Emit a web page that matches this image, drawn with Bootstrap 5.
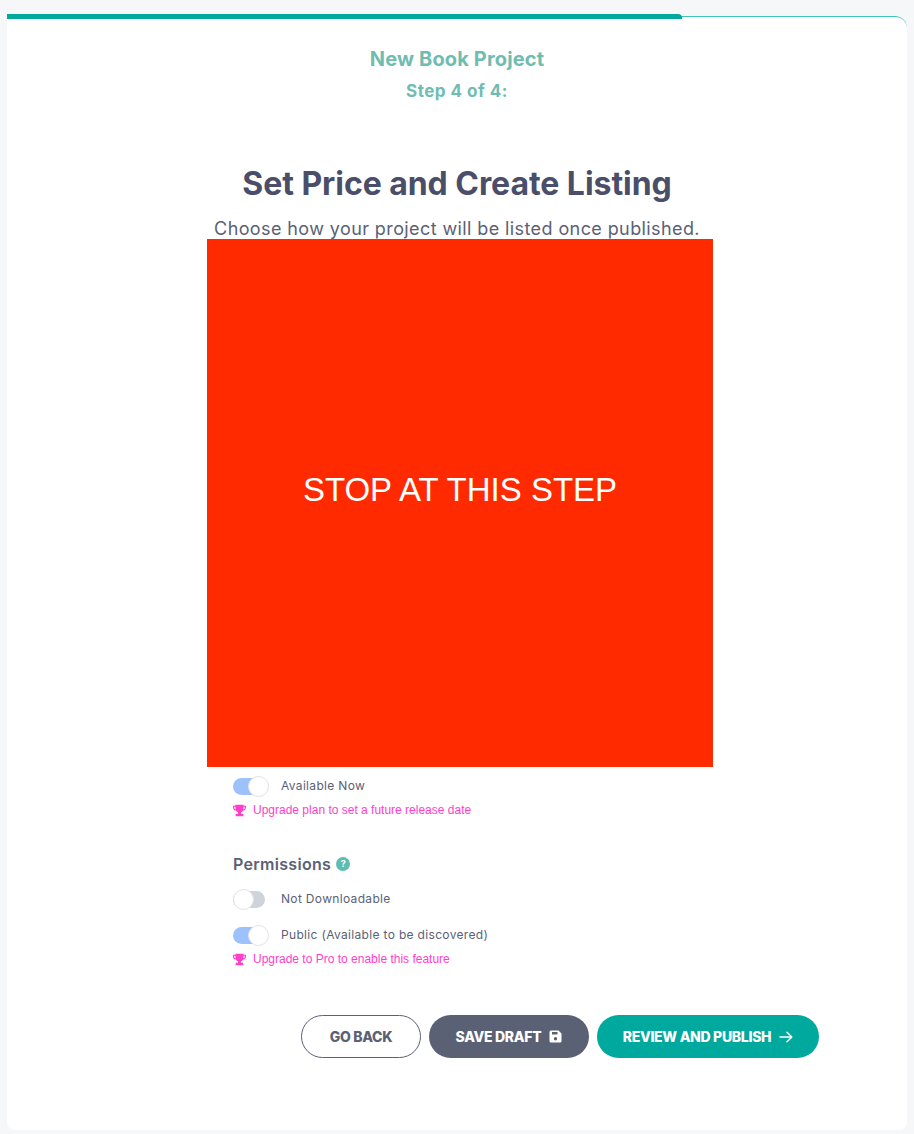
<!DOCTYPE html>
<html lang="en">
<head>
<meta charset="utf-8">
<title>New Book Project</title>
<link href="https://cdn.jsdelivr.net/npm/bootstrap@5.3.0/dist/css/bootstrap.min.css" rel="stylesheet">
<style>
html,body{height:100%}
body{background:#f6f7f9;font-family:"Inter","Noto Sans",sans-serif;color:#5a6175;margin:0;overflow:hidden}
.shell{position:relative;margin:0 7px;padding-top:16px;height:1130px}
.prog{position:absolute;left:0;top:14px;width:675px;height:5px;background:#00a99d;border-top-right-radius:4px}
.sheet{height:1114px;background:#fff;border-top:1px solid #3fc4b8;border-radius:0 12px 8px 8px;display:flex;flex-direction:column;align-items:center}
.t1{margin:29px 0 0;font-size:20px;line-height:26px;font-weight:700;color:#6fbcb1;letter-spacing:.14px}
.t2{margin:7px 0 0;font-size:17px;line-height:24px;font-weight:700;color:#6fbcb1;letter-spacing:.5px}
.t3{margin:58px 0 0;font-size:32px;line-height:46px;font-weight:700;color:#4a4e69;letter-spacing:-.05px}
.t4{margin:10px 0 0;font-size:18px;line-height:24px;font-weight:400;color:#5a6175;letter-spacing:.4px}
.stopbox{width:506px;height:528px;margin:-2px 0 0 6px;padding-bottom:26px;background:#ff2a00;color:#fff;font-family:"Liberation Sans",sans-serif;font-size:33px}
.opts{width:460px;margin:8px 0 0 12px}
.optrow{height:22px;gap:16px;font-size:12px;color:#5a6175;letter-spacing:.33px}
.sw{position:relative;display:block;width:32px;height:17px;border-radius:9px;background:#cfd3da;flex:none}
.sw.on{background:#9dc1fb}
.sw i{position:absolute;top:-2px;left:0;width:21px;height:21px;border-radius:50%;background:#fff;border:1px solid #dfe2e7}
.sw.on i{left:15px}
.upg{font-family:"Liberation Sans",sans-serif;font-size:12px;line-height:16px;color:#ff3ec9;gap:7px;margin-top:5px}
.perm{margin:35px 0 0;font-size:16px;line-height:22px;font-weight:600;color:#5a6175;gap:5px;letter-spacing:.3px}
.qm{width:14px;height:14px;border-radius:50%;background:#5dbdb1;color:#fff;font-size:9px;line-height:14px;font-weight:700;text-align:center;display:inline-block;letter-spacing:0}
.gaprow{margin-top:13px}
.gaprow2{margin-top:14px}
.acts{width:518px;margin:48px 0 0 206px;gap:8px}
.pill{height:43px;border-radius:22px;font-size:14px;font-weight:800;letter-spacing:-.3px;padding:0;display:flex;align-items:center;justify-content:center;gap:8px;text-transform:uppercase}
.pill.back{width:120px;background:#fff;border:1px solid #5a6175;color:#5a6175}
.pill.draft{width:160px;background:#5a6175;border:0;color:#fff}
.pill.pub{width:222px;background:#00a99d;border:0;color:#fff}
</style>
</head>
<body>
<div class="shell">
  <div class="prog"></div>
  <div class="sheet">
    <h1 class="t1">New Book Project</h1>
    <h2 class="t2">Step 4 of 4:</h2>
    <h2 class="t3">Set Price and Create Listing</h2>
    <p class="t4">Choose how your project will be listed once published.</p>
    <div class="stopbox d-flex align-items-center justify-content-center">STOP AT THIS STEP</div>
    <div class="opts">
      <div class="optrow d-flex align-items-center"><span class="sw on"><i></i></span><span>Available Now</span></div>
      <div class="upg d-flex align-items-center">
        <svg width="13" height="13" viewBox="0 0 16 16" fill="#ff3ec9"><path d="M3 1h10v1h3v2.5c0 2-1.5 3.4-3.6 3.6-.6 1.2-1.5 1.9-2.6 2.2V12h1.7c.8 0 1.3.6 1.3 1.3V15H3.2v-1.7c0-.7.5-1.3 1.3-1.3h1.7v-1.7c-1.1-.3-2-1-2.6-2.2C1.5 7.9 0 6.500 0 4.500V2h3V1zm-1.500 2.500v1c0 1.100.7 1.900 1.800 2.100C3.100 5.700 3 4.600 3 3.500H1.500zm13 0H13c0 1.100-.1 2.200-.3 3.100 1.100-.2 1.800-1 1.800-2.100v-1z"/></svg>
        <span>Upgrade plan to set a future release date</span>
      </div>
      <div class="perm d-flex align-items-center"><span>Permissions</span><span class="qm">?</span></div>
      <div class="optrow gaprow d-flex align-items-center"><span class="sw"><i></i></span><span>Not Downloadable</span></div>
      <div class="optrow gaprow2 d-flex align-items-center"><span class="sw on"><i></i></span><span>Public (Available to be discovered)</span></div>
      <div class="upg d-flex align-items-center">
        <svg width="13" height="13" viewBox="0 0 16 16" fill="#ff3ec9"><path d="M3 1h10v1h3v2.5c0 2-1.5 3.4-3.6 3.6-.6 1.2-1.5 1.9-2.6 2.2V12h1.7c.8 0 1.3.6 1.3 1.3V15H3.2v-1.7c0-.7.5-1.3 1.3-1.3h1.7v-1.7c-1.1-.3-2-1-2.6-2.2C1.5 7.9 0 6.500 0 4.500V2h3V1zm-1.500 2.500v1c0 1.100.7 1.900 1.800 2.100C3.100 5.700 3 4.600 3 3.500H1.500zm13 0H13c0 1.100-.1 2.200-.3 3.100 1.100-.2 1.800-1 1.800-2.100v-1z"/></svg>
        <span>Upgrade to Pro to enable this feature</span>
      </div>
    </div>
    <div class="acts d-flex">
      <button class="btn pill back">Go back</button>
      <button class="btn pill draft">Save draft
        <svg width="13" height="13" viewBox="0 0 13 13"><path fill="#fff" fill-rule="evenodd" d="M2 .5h7.500L12.500 3.500V11a1.500 1.500 0 0 1-1.500 1.500H2A1.500 1.500 0 0 1 .5 11V2A1.500 1.500 0 0 1 2 .5zM3 2v2.500h5.500V2H3zm3.500 5a1.700 1.700 0 1 0 0 3.400 1.700 1.700 0 0 0 0-3.400z"/></svg>
      </button>
      <button class="btn pill pub">Review and publish
        <svg width="14" height="12" viewBox="0 0 14 12" fill="none" stroke="#fff" stroke-width="1.500" stroke-linecap="round" stroke-linejoin="round"><path d="M1 6h11.500M8 1.200 12.800 6 8 10.800"/></svg>
      </button>
    </div>
  </div>
</div>
<script src="https://cdn.jsdelivr.net/npm/bootstrap@5.3.0/dist/js/bootstrap.bundle.min.js"></script>
</body>
</html>
